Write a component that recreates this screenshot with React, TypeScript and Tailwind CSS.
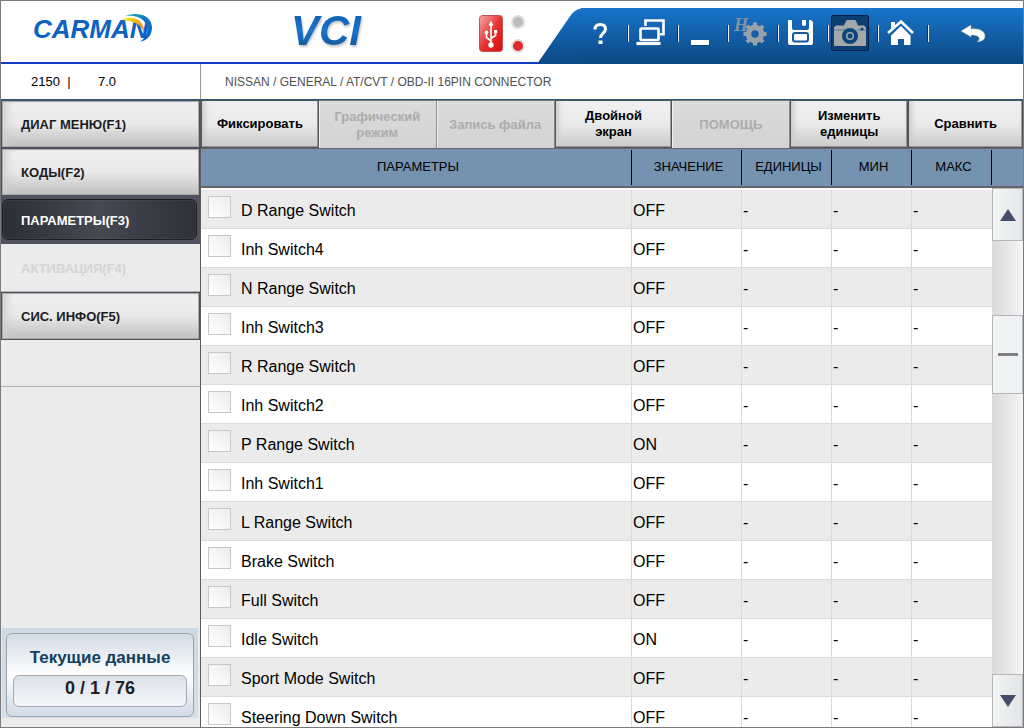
import React, { useState } from 'react'
import clsx from 'clsx'

interface IParameter {
  name: string
  value: 'ON' | 'OFF'
}

interface IMenuItem {
  label: string
  disabled?: boolean
}

const menuItems: IMenuItem[] = [
  { label: 'ДИАГ МЕНЮ(F1)' },
  { label: 'КОДЫ(F2)' },
  { label: 'ПАРАМЕТРЫ(F3)' },
  { label: 'АКТИВАЦИЯ(F4)', disabled: true },
  { label: 'СИС. ИНФО(F5)' },
]

const toolbarItems: IMenuItem[] = [
  { label: 'Фиксировать' },
  { label: 'Графический режим', disabled: true },
  { label: 'Запись файла', disabled: true },
  { label: 'Двойной экран' },
  { label: 'ПОМОЩЬ', disabled: true },
  { label: 'Изменить единицы' },
  { label: 'Сравнить' },
]

const parameters: IParameter[] = [
  { name: 'D Range Switch', value: 'OFF' },
  { name: 'Inh Switch4', value: 'OFF' },
  { name: 'N Range Switch', value: 'OFF' },
  { name: 'Inh Switch3', value: 'OFF' },
  { name: 'R Range Switch', value: 'OFF' },
  { name: 'Inh Switch2', value: 'OFF' },
  { name: 'P Range Switch', value: 'ON' },
  { name: 'Inh Switch1', value: 'OFF' },
  { name: 'L Range Switch', value: 'OFF' },
  { name: 'Brake Switch', value: 'OFF' },
  { name: 'Full Switch', value: 'OFF' },
  { name: 'Idle Switch', value: 'ON' },
  { name: 'Sport Mode Switch', value: 'OFF' },
  { name: 'Steering Down Switch', value: 'OFF' },
]

const columns = [
  { title: 'ПАРАМЕТРЫ', width: '' },
  { title: 'ЗНАЧЕНИЕ', width: 'w-[110px]' },
  { title: 'ЕДИНИЦЫ', width: 'w-[90px]' },
  { title: 'МИН', width: 'w-20' },
  { title: 'МАКС', width: 'w-20' },
]

const HelpIcon = () => (
  <svg width="38" height="36" viewBox="0 0 38 36" fill="none">
    <path
      d="M14 14.500c0-3.500 2.300-5 5.200-5 3.200 0 5.300 1.700 5.300 4.500 0 4.200-5 4-5 9"
      stroke="#fff"
      strokeWidth="3"
    />
    <path d="M17.500 25.500h4V29h-4z" fill="#fff" />
  </svg>
)

const ScreensIcon = () => (
  <svg width="38" height="36" viewBox="0 0 38 36" fill="none" stroke="#fff">
    <path d="M14.500 11V5.500h18v13.700H29" strokeWidth="2.600" />
    <rect x="9.500" y="13.500" width="18" height="11.500" rx="1" strokeWidth="2.600" />
    <path d="m5.500 28.500 24 0" strokeWidth="3.200" />
  </svg>
)

const MinimizeIcon = () => (
  <svg width="38" height="36" viewBox="0 0 38 36">
    <path d="M11 26h18v5H11z" fill="#0a3560" opacity=".6" />
    <path d="M10 25h18v5H10z" fill="#fff" />
  </svg>
)

const GearIcon = () => (
  <svg width="38" height="36" viewBox="0 0 38 36" fill="#98a2a9">
    <text
      x="3"
      y="16"
      fill="#8593a0"
      className="font-['Liberation_Serif',serif] text-lg font-bold italic"
    >
      H
    </text>
    <circle cx="24" cy="19" r="6.500" fill="none" stroke="#98a2a9" strokeWidth="5.500" />
    <path d="M22 7.500h4v4h-4zM22 26.500h4v4h-4zM12.500 17h4v4h-4zM31.500 17h4v4h-4z" />
    <path
      d="M22 7.500h4v4h-4zM22 26.500h4v4h-4zM12.500 17h4v4h-4zM31.500 17h4v4h-4z"
      transform="rotate(45 24 19)"
    />
  </svg>
)

const SaveIcon = () => (
  <svg width="38" height="36" viewBox="0 0 38 36">
    <path
      d="M7 5h4v8q0 2 2 2h13q2 0 2-2V5h2l2 2v21q0 2-2 2H9q-2 0-2-2z"
      fill="#fff"
    />
    <path d="M12 5h15v6.500q0 1.500-1.500 1.500h-12Q12 13 12 11.500z" fill="#1567b4" />
    <path d="M21 5h4v5q-2 2-4 0z" fill="#fff" />
    <rect x="12" y="18" width="15" height="8.500" rx="2" fill="#fff" stroke="#145a9c" strokeWidth="2" />
  </svg>
)

const CameraIcon = () => (
  <svg width="36" height="34" viewBox="0 0 36 34">
    <path
      d="M2 11.500 4 9.500h8L14 5q.5-1 1.500-1h7q1 0 1.500 1l2 4.500h6l2 2V29q0 1-1 1H3q-1 0-1-1z"
      fill="#a3a8aa"
    />
    <path d="M2 14h11M25 14h9" stroke="#0d447b" opacity=".5" />
    <circle cx="18" cy="20" r="6" fill="#a3a8aa" stroke="#0d447b" strokeWidth="4" />
    <circle cx="18" cy="20" r="2.500" fill="#0d447b" />
    <circle cx="30" cy="13" r="1.500" fill="#0d447b" />
  </svg>
)

const HomeIcon = () => (
  <svg width="38" height="36" viewBox="0 0 38 36">
    <path d="M7 18 20 6.500 32 18" fill="none" stroke="#fff" strokeWidth="2.600" />
    <path d="M10 7h4v3.500L10 14z" fill="#fff" />
    <path d="m20 11 9.500 9.500V30h-6.500v-6h-6v6h-7v-9.500z" fill="#fff" />
  </svg>
)

const BackIcon = () => (
  <svg width="38" height="36" viewBox="0 0 38 36">
    <path
      d="m6 16 10-6v4c8-1 14 2 14 7 0 4-3 5-8 6 4-3 3-7-6-7v2z"
      fill="#fff"
      stroke="#b7a58d"
      strokeWidth=".5"
    />
  </svg>
)

const headerActions = [
  { title: 'Помощь', icon: <HelpIcon /> },
  { title: 'Окна', icon: <ScreensIcon /> },
  { title: 'Свернуть', icon: <MinimizeIcon /> },
  { title: 'Настройки', icon: <GearIcon /> },
  { title: 'Сохранить', icon: <SaveIcon /> },
  { title: 'Снимок', icon: <CameraIcon />, active: true },
  { title: 'Домой', icon: <HomeIcon /> },
]

const UsbBadge = () => (
  <svg width="24" height="37" viewBox="0 0 24 37" fill="none">
    <defs>
      <linearGradient id="usb" x1="0" y1="0" x2="1" y2="1">
        <stop offset="0" stopColor="#f6a9a9" />
        <stop offset=".5" stopColor="#e63434" />
        <stop offset="1" stopColor="#d90a0a" />
      </linearGradient>
    </defs>
    <rect x=".5" y=".5" width="23" height="36" rx="3" fill="url(#usb)" stroke="#c65050" />
    <path
      d="M12 9v22M12 26l-4.500-3.500V18M12 23.500l4.500-3V17"
      stroke="#fff"
      strokeWidth="1.600"
    />
    <path d="m12 5.500 2.600 5H9.400zM15 15h3.200v3.200H15z" fill="#fff" />
    <circle cx="7.500" cy="17.500" r="1.900" fill="#fff" />
    <circle cx="12" cy="30" r="2.700" fill="#fff" />
  </svg>
)

const Led = ({ on }: { on?: boolean }) => (
  <span
    className={clsx(
      'size-3.5 rounded-full border-2 border-[#dedede]',
      on ? 'bg-[#dc2a2a]' : 'bg-[#bdbdbd]'
    )}
  />
)

const Header = () => (
  <header className="flex h-[63px] shrink-0 border-b-2 border-[#1239c4] bg-white">
    <div className="relative w-[200px] shrink-0 pt-2.5 pl-8">
      <span className="text-[26px] leading-9 font-bold text-[#0b62c1] italic">
        CARMAN
      </span>
      <svg
        className="absolute top-3 left-[118px]"
        width="36"
        height="30"
        viewBox="0 0 36 30"
      >
        <defs>
          <linearGradient id="swoosh" x1="0" y1="0" x2="1" y2="1">
            <stop offset="0" stopColor="#17b6b0" />
            <stop offset=".5" stopColor="#1374c6" />
            <stop offset="1" stopColor="#0b5fc0" />
          </linearGradient>
          <linearGradient id="flame" x1="0" y1="0" x2="1" y2="1">
            <stop offset="0" stopColor="#f8f000" />
            <stop offset="1" stopColor="#e0703a" />
          </linearGradient>
        </defs>
        <path d="M6 3C15-1 32 0 33 14c0 8-4 13-12 15 7-6 9-12 6-18C23 4 15 2 6 3z" fill="url(#swoosh)" />
        <path d="M3 7c9-5 22-2 22 12-3-7-9-11-22-12z" fill="url(#flame)" />
      </svg>
    </div>
    <div className="pt-2 pl-[90px]">
      <span className="bg-linear-to-b from-[#0a58a4] via-[#1a74cc] to-[#0c4c8c] bg-clip-text pr-1 text-[42px] leading-[44px] font-bold text-transparent italic drop-shadow-[1px_2px_1px_#c4c4c4]">
        VCI
      </span>
    </div>
    <div className="mr-3 ml-auto flex gap-2 pt-3.5">
      <UsbBadge />
      <div className="flex h-[38px] flex-col justify-between">
        <Led />
        <Led on />
      </div>
    </div>
    <svg className="mt-[7px] shrink-0" width="48" height="56" viewBox="0 0 48 56">
      <defs>
        <linearGradient id="bar" x1="0" y1="0" x2="0" y2="1">
          <stop offset="0" stopColor="#1875cb" />
          <stop offset="1" stopColor="#0c4883" />
        </linearGradient>
      </defs>
      <path d="M0 56 34 7Q39 0 48 0V56z" fill="url(#bar)" />
    </svg>
    <div className="mt-[7px] -ml-1 flex h-14 shrink-0 bg-linear-to-b from-[#1875cb] to-[#0c4883] pt-[7px] pr-[30px]">
      {headerActions.map((action) => (
        <div key={action.title} className="flex h-9 w-[50px] items-center">
          <button
            aria-label={action.title}
            className={clsx(
              'flex h-9 w-[38px] items-center justify-center rounded-xs',
              action.active && 'border border-[#061d4a] bg-[#0d3f73]'
            )}
          >
            {action.icon}
          </button>
          <span className="ml-2 h-[17px] w-0.5 border-l border-[#12304f] bg-[#e8eef4]" />
        </div>
      ))}
      <button aria-label="Назад" className="ml-6 h-9 w-[38px]">
        <BackIcon />
      </button>
    </div>
  </header>
)

const Sidebar = () => {
  const [selected, setSelected] = useState('ПАРАМЕТРЫ(F3)')

  return (
    <aside className="flex w-[200px] shrink-0 flex-col border-r border-[#5c5c5c] bg-[#ebebeb]">
      <nav>
        {menuItems.map(({ label, disabled }) => {
          const isSelected = label === selected
          return (
            <div
              key={label}
              className={clsx(
                'flex h-12',
                disabled
                  ? 'border-b border-[#b0b3b6]'
                  : isSelected
                    ? 'bg-[#50535f] pt-[3px] pr-[3px] pb-1 pl-px'
                    : 'bg-[#4f525c] p-px'
              )}
            >
              <button
                disabled={disabled}
                onClick={() => setSelected(label)}
                className={clsx(
                  'flex-1 pt-0.5 text-left text-[13px] leading-4 font-bold',
                  disabled && 'pl-5 text-[#d4d4d4]',
                  !disabled &&
                    isSelected &&
                    'rounded-md border border-[#1d1e24] bg-linear-to-r from-[#2d2e36] via-[#464952] to-[#2f3038] pl-[18px] text-white shadow-[inset_0_0_1px_#8a8d96]',
                  !disabled &&
                    !isSelected &&
                    'border border-[#a9a9a9] bg-linear-to-b from-[#f0f0f0] via-[#e9e9e9] via-50% to-[#c0c0c0] pl-[18px] text-[#1c1c1c] shadow-[inset_8px_0_8px_-4px_#cfcfcf]'
                )}
              >
                {label}
              </button>
            </div>
          )
        })}
        <div className="h-[47px] border-b border-[#b0b3b6]" />
      </nav>
      <div className="mt-auto mr-0.5 mb-[9px] ml-px bg-linear-to-b from-[#cdd9e4] to-[#d5dfe9] px-1 pt-[5px] pb-px">
        <div className="rounded-md border border-[#98a4b0] bg-linear-to-b from-[#d2dbe6] via-white to-[#d0dae6] px-1.5 pt-3.5 pb-[9px] text-center font-bold">
          <div className="text-[17px] leading-5 text-[#12405f]">
            Текущие данные
          </div>
          <div className="mt-[7px] h-8 rounded-md border border-[#a3a8ae] bg-linear-to-b from-[#dce2e9] to-[#f5f7fb] text-lg leading-6 text-[#222]">
            0 / 1 / 76
          </div>
        </div>
      </div>
    </aside>
  )
}

const Toolbar = () => (
  <div className="grid h-[49px] shrink-0 grid-cols-[repeat(6,118fr)_115fr] border-b border-[#666]">
    {toolbarItems.map(({ label, disabled }) => (
      <button
        key={label}
        disabled={disabled}
        className={clsx(
          'px-2.5 text-[13px] leading-4 font-bold',
          disabled
            ? 'border-t border-r border-t-[#777] border-r-[#8c8c8c] bg-linear-to-b from-[#dcdcdc] to-[#d2d2d2] text-[#acacac] shadow-[inset_1px_0_0_#f0f0f0]'
            : 'border border-[#50525c] bg-linear-to-b from-[#f0f0f0] via-[#eaeaea] via-50% to-[#c9c9c9] text-black shadow-[inset_-1px_-1px_0_#999,inset_6px_0_5px_-3px_#ccc]'
        )}
      >
        {label}
      </button>
    ))}
  </div>
)

const ParameterTable = () => {
  const [checked, setChecked] = useState<string[]>([])

  const toggle = (name: string) => {
    setChecked((prev) =>
      prev.includes(name) ? prev.filter((n) => n !== name) : [...prev, name]
    )
  }

  return (
    <div className="min-w-0 flex-1 overflow-hidden">
      <table className="w-full table-fixed border-separate border-spacing-0">
        <thead>
          <tr className="bg-[#7593b1]">
            {columns.map((column) => (
              <th
                key={column.title}
                className={clsx(
                  'h-[39px] border-b-2 border-[#666] p-0 text-[13px] leading-4 font-normal text-black',
                  column.width
                )}
              >
                <div className="flex h-[35px] items-center justify-center border-r border-black pb-0.5 pl-1">
                  {column.title}
                </div>
              </th>
            ))}
          </tr>
          <tr aria-hidden="true">
            <td colSpan={5} className="h-0.5 p-0" />
          </tr>
        </thead>
        <tbody>
          {parameters.map(({ name, value }) => (
            <tr key={name} className="odd:bg-[#ebebeb] even:bg-white">
              <td className="h-[39px] border-r border-b border-[#dadada] p-0">
                <label className="flex items-center pl-[7px]">
                  <input
                    type="checkbox"
                    checked={checked.includes(name)}
                    onChange={() => toggle(name)}
                    className="mr-2.5 mb-1 h-[22px] w-[23px] appearance-none border border-[#c8c8c8] bg-linear-to-bl from-[#ececec] to-white checked:bg-[#7593b1]"
                  />
                  <span className="pt-1 leading-5">{name}</span>
                </label>
              </td>
              <td className="border-r border-b border-[#dadada] p-0 pt-1 pl-px leading-5">
                {value}
              </td>
              <td className="border-r border-b border-[#dadada] p-0 pt-1 pl-px leading-5">
                -
              </td>
              <td className="border-r border-b border-[#dadada] p-0 pt-1 pl-px leading-5">
                -
              </td>
              <td className="border-b border-[#dadada] p-0 pt-1 pl-px leading-5">
                -
              </td>
            </tr>
          ))}
        </tbody>
      </table>
    </div>
  )
}

const ScrollColumn = () => (
  <div className="flex w-[31px] shrink-0 flex-col bg-linear-to-r from-[#d9d9d9] to-[#f6f6f6]">
    <div className="h-[39px] shrink-0 border-b-2 border-[#666] bg-[#7593b1]" />
    <button
      aria-label="Вверх"
      className="flex h-[53px] shrink-0 items-center justify-center border border-[#b5b7ba] bg-linear-to-r from-[#f3f5f4] to-[#e5e7e9]"
    >
      <svg width="16" height="12" viewBox="0 0 16 12">
        <path d="M8 0l8 12H0z" fill="#454d6b" />
      </svg>
    </button>
    <div className="grow-[74]" />
    <div className="flex h-[79px] shrink-0 items-center justify-center border border-[#b5b7ba] bg-linear-to-r from-[#f2f4f3] to-[#eef1f6]">
      <span className="h-[3px] w-5 bg-[#808080]" />
    </div>
    <div className="grow-[280]" />
    <button
      aria-label="Вниз"
      className="flex h-[53px] shrink-0 items-center justify-center border border-[#b5b7ba] bg-linear-to-r from-[#f3f5f4] to-[#e2e4e6]"
    >
      <svg width="16" height="12" viewBox="0 0 16 12">
        <path d="M0 0h16L8 12z" fill="#454d6b" />
      </svg>
    </button>
  </div>
)

const App = () => {
  return (
    <div className="flex h-screen flex-col overflow-hidden border border-[#7a7a7a] bg-white font-['Liberation_Sans',Arial,sans-serif] text-base text-black">
      <Header />
      <div className="flex h-9 shrink-0 items-center border-b border-[#24588a]">
        <div className="flex h-full w-[200px] shrink-0 items-center border-r border-[#9a9a9a] pl-[30px] text-[13px] leading-4">
          <span className="w-[67px]">2150 &nbsp;|</span>
          <span>7.0</span>
        </div>
        <div className="pl-6 text-xs text-[#505050]">
          NISSAN / GENERAL / AT/CVT / OBD-II 16PIN CONNECTOR
        </div>
      </div>
      <div className="flex min-h-0 flex-1">
        <Sidebar />
        <main className="flex min-w-0 flex-1 flex-col">
          <Toolbar />
          <div className="flex min-h-0 flex-1">
            <ParameterTable />
            <ScrollColumn />
          </div>
        </main>
      </div>
    </div>
  )
}

export default App
